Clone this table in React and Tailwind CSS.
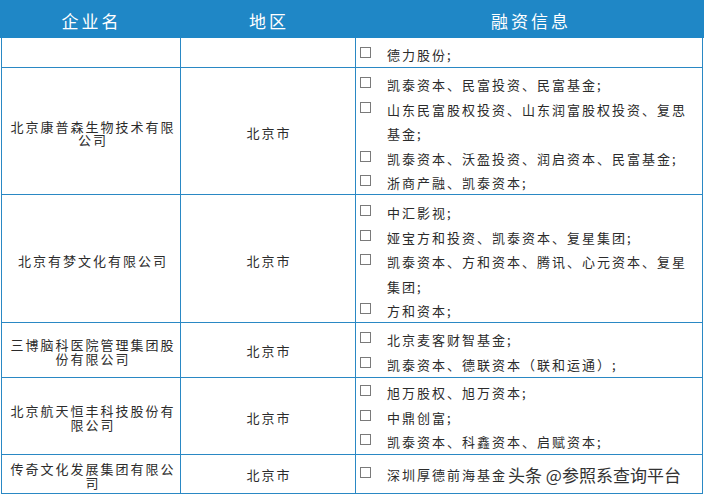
import React from "react";

const FONT = { fontFamily: '"Noto Sans CJK SC", "Noto Sans", sans-serif' };

const rows = [
  { name: "", region: "", h: "h-[30px]", pt: "pt-[5px]", items: ["德力股份;"] },
  {
    name: "北京康普森生物技术有限公司",
    region: "北京市",
    h: "h-[127px]",
    pt: "pt-[5px]",
    items: [
      "凯泰资本、民富投资、民富基金;",
      "山东民富股权投资、山东润富股权投资、复思基金;",
      "凯泰资本、沃盈投资、润启资本、民富基金;",
      "浙商产融、凯泰资本;",
    ],
  },
  {
    name: "北京有梦文化有限公司",
    region: "北京市",
    h: "h-[128px]",
    pt: "pt-[6px]",
    items: [
      "中汇影视;",
      "娅宝方和投资、凯泰资本、复星集团;",
      "凯泰资本、方和资本、腾讯、心元资本、复星集团;",
      "方和资本;",
    ],
  },
  {
    name: "三博脑科医院管理集团股份有限公司",
    region: "北京市",
    h: "h-[55px]",
    pt: "pt-[5px]",
    items: ["北京麦客财智基金;", "凯泰资本、德联资本（联和运通）;"],
  },
  {
    name: "北京航天恒丰科技股份有限公司",
    region: "北京市",
    h: "h-[77px]",
    pt: "pt-[3px]",
    items: ["旭万股权、旭万资本;", "中鼎创富;", "凯泰资本、科鑫资本、启赋资本;"],
  },
  {
    name: "传奇文化发展集团有限公司",
    region: "北京市",
    h: "h-[39px]",
    pt: "pt-[8px]",
    items: ["深圳厚德前海基金"],
  },
];

function Item({ text }) {
  return (
    <div className="flex items-start">
      <div className="mt-[4px] w-[11px] h-[11px] shrink-0 border border-[#7a7a7a] bg-white" />
      <div className="ml-[16px] flex-1 min-w-0 leading-[24.5px]">{text}</div>
    </div>
  );
}

export default function App() {
  return (
    <div
      className="relative w-[704px] h-[496px] bg-white text-[13px] tracking-[2px] text-[#2b2b2b] overflow-hidden"
      style={FONT}
    >
      <div className="flex h-[38px] bg-[#1f87c6] text-white text-[17px] tracking-[3px]">
        <div className="w-[180px] flex items-center justify-center pt-[3px] pl-[3px]">企业名</div>
        <div className="w-[175px] flex items-center justify-center pt-[3px] pl-[3px]">地区</div>
        <div className="flex-1 flex items-center justify-center pt-[3px] pl-[3px]">融资信息</div>
      </div>
      <div className="ml-[1px] w-[702px] border-l border-r border-[#2a88c4]">
        {rows.map((r, i) => (
          <div
            key={i}
            className={`grid grid-cols-[179px_175px_1fr] border-b border-[#2a88c4] ${r.h}`}
          >
            <div className="border-r border-[#2a88c4] flex items-center justify-center text-center leading-[13.5px] pl-[4px] pt-[3px]">
              {r.name}
            </div>
            <div className="border-r border-[#2a88c4] flex items-center justify-center pl-[2px] pt-[2px]">
              {r.region}
            </div>
            <div className={`pl-[4px] pr-[6px] ${r.pt}`}>
              {r.items.map((t, j) => (
                <Item key={j} text={t} />
              ))}
            </div>
          </div>
        ))}
      </div>
      <div
        className="absolute left-[508px] top-[463px] text-[17px] leading-[24px] tracking-[0px] text-[#333333] whitespace-nowrap"
        style={{
          fontFamily: '"Noto Sans CJK SC", sans-serif',
          textShadow:
            "1px 0 0 #fff, -1px 0 0 #fff, 0 1px 0 #fff, 0 -1px 0 #fff, 1px 1px 0 #fff, -1px -1px 0 #fff",
        }}
      >
        头条 @参照系查询平台
      </div>
    </div>
  );
}
